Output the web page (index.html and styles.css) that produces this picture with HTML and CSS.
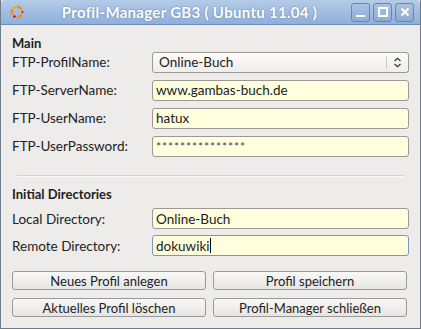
FILE: index.html
```html
<!DOCTYPE html>
<html lang="de">
<head>
  <meta charset="UTF-8">
  <title>Profil-Manager GB3</title>
  <link rel="stylesheet" href="styles.css">
</head>
<body>
  <div class="window">
    <div class="titlebar">
      <svg class="logo" width="18" height="18" viewBox="0 0 18 18">
        <circle cx="9" cy="9" r="5.2" fill="none" stroke="#f08a22" stroke-width="2.4"/>
        <circle cx="14.3" cy="9" r="2" fill="#dd4814" stroke="#b9d0ea" stroke-width="1"/>
        <circle cx="6.4" cy="4.5" r="2" fill="#e7a21d" stroke="#b9d0ea" stroke-width="1"/>
        <circle cx="6.4" cy="13.5" r="2" fill="#c21f24" stroke="#b9d0ea" stroke-width="1"/>
      </svg>
      <div class="title">Profil-Manager GB3 ( Ubuntu 11.04 )</div>
      <div class="wbtns">
        <div class="wbtn"><span class="min"></span></div>
        <div class="wbtn"><span class="max"></span></div>
        <div class="wbtn"><svg width="10" height="10" viewBox="0 0 10 10"><path d="M1.5 1.5 L8.5 8.5 M8.5 1.5 L1.5 8.5" stroke="#fff" stroke-width="2.2"/></svg></div>
      </div>
    </div>
    <div class="content">
      <div class="section">Main</div>
      <div class="group main-group">
        <div class="row">
          <label>FTP-ProfilName:</label>
          <div class="combo">
            <span>Online-Buch</span>
            <span class="sep"></span>
            <svg width="9" height="11" viewBox="0 0 9 11"><path d="M1.5 4 L4.5 1.2 L7.5 4 M1.5 7 L4.5 9.8 L7.5 7" fill="none" stroke="#333" stroke-width="1.2"/></svg>
          </div>
        </div>
        <div class="row">
          <label>FTP-ServerName:</label>
          <div class="field">www.gambas-buch.de</div>
        </div>
        <div class="row">
          <label>FTP-UserName:</label>
          <div class="field">hatux</div>
        </div>
        <div class="row">
          <label>FTP-UserPassword:</label>
          <div class="field pw">***************</div>
        </div>
      </div>
      <hr class="divider">
      <div class="section">Initial Directories</div>
      <div class="group dir-group">
        <div class="row">
          <label>Local Directory:</label>
          <div class="field">Online-Buch</div>
        </div>
        <div class="row">
          <label>Remote Directory:</label>
          <div class="field focus">dokuwiki<span class="caret"></span></div>
        </div>
      </div>
      <div class="buttons">
        <button>Neues Profil anlegen</button>
        <button>Profil speichern</button>
        <button>Aktuelles Profil löschen</button>
        <button>Profil-Manager schließen</button>
      </div>
    </div>
  </div>
</body>
</html>
```
FILE: styles.css
```css
body{
  margin: 0;
  font-family: Lato, "Open Sans", sans-serif;
  font-size: 13.5px;
  color: #222;
}
.window{
  width: 421px;
  height: 329px;
  box-sizing: border-box;
  border: 1px solid #6d7a8a;
  border-top: none;
  background: #edeceb;
  display: flex;
  flex-direction: column;
}
.titlebar{
  height: 24px;
  display: flex;
  align-items: center;
  background: linear-gradient(#b3cbe7, #8fb0d9);
  border-bottom: 1px solid #6a8ab5;
  padding: 0 6px 0 4px;
  border-radius: 4px 4px 0 0;
}
.logo{
  margin-left: 3px;
}
.title{
  flex: 1;
  text-align: center;
  color: #fff;
  font-weight: bold;
  font-size: 15px;
  letter-spacing: 0.3px;
  text-shadow: 0 0 2px #5c7aa3;
  margin-left: 2px;
}
.wbtns{
  display: flex;
  gap: 3px;
}
.wbtn{
  width: 17px;
  height: 17px;
  border: 1px solid #6885ae;
  border-radius: 3px;
  background: linear-gradient(#a8c2e2, #8fadd4);
  display: flex;
  align-items: center;
  justify-content: center;
}
.min{
  width: 9px;
  height: 2px;
  background: #fff;
  margin-top: 8px;
}
.max{
  width: 6px;
  height: 6px;
  border: 2px solid #fff;
}
.content{
  padding: 10px 11px 0 11px;
}
.section{
  font-weight: bold;
  font-size: 13px;
  height: 16px;
  line-height: 16px;
}
.main-group{
  margin-top: -3px;
}
.dir-group{
  margin-top: 3px;
}
.row{
  display: flex;
  align-items: center;
  height: 28px;
}
.dir-group .row{
  height: 27px;
}
.row label{
  width: 140px;
}
.combo, .field{
  flex: 1;
  height: 21px;
  box-sizing: border-box;
  border: 1px solid #9a9a93;
  border-radius: 3px;
  display: flex;
  align-items: center;
  padding: 0 4px;
}
.combo{
  background: linear-gradient(#fbfbfa, #efeeec);
  padding: 0 6px;
}
.combo span:first-child{
  flex: 1;
}
.sep{
  width: 1px;
  height: 13px;
  background: #c8c8c4;
  margin-right: 6px;
}
.field{
  background: #ffffdd;
  padding: 0 3px;
}
.pw{
  font-size: 12px;
  letter-spacing: 0.9px;
  color: #444;
}
.focus{
  border-color: #7c95b8;
}
.caret{
  width: 1px;
  height: 15px;
  background: #000;
}
.divider{
  border: none;
  border-top: 1px solid #d3d2d0;
  border-bottom: 1px solid #fafafa;
  margin: 15px 5px 9px 5px;
}
.buttons{
  display: grid;
  grid-template-columns: 1fr 1fr;
  column-gap: 7px;
  row-gap: 8px;
  margin-top: 12px;
  padding-right: 2px;
}
.buttons button{
  height: 19px;
  font-family: inherit;
  font-size: 13px;
  color: #222;
  border: 1px solid #9a9a96;
  border-radius: 3px;
  background: linear-gradient(#f8f8f7, #e6e5e3);
  padding: 0;
}
```
